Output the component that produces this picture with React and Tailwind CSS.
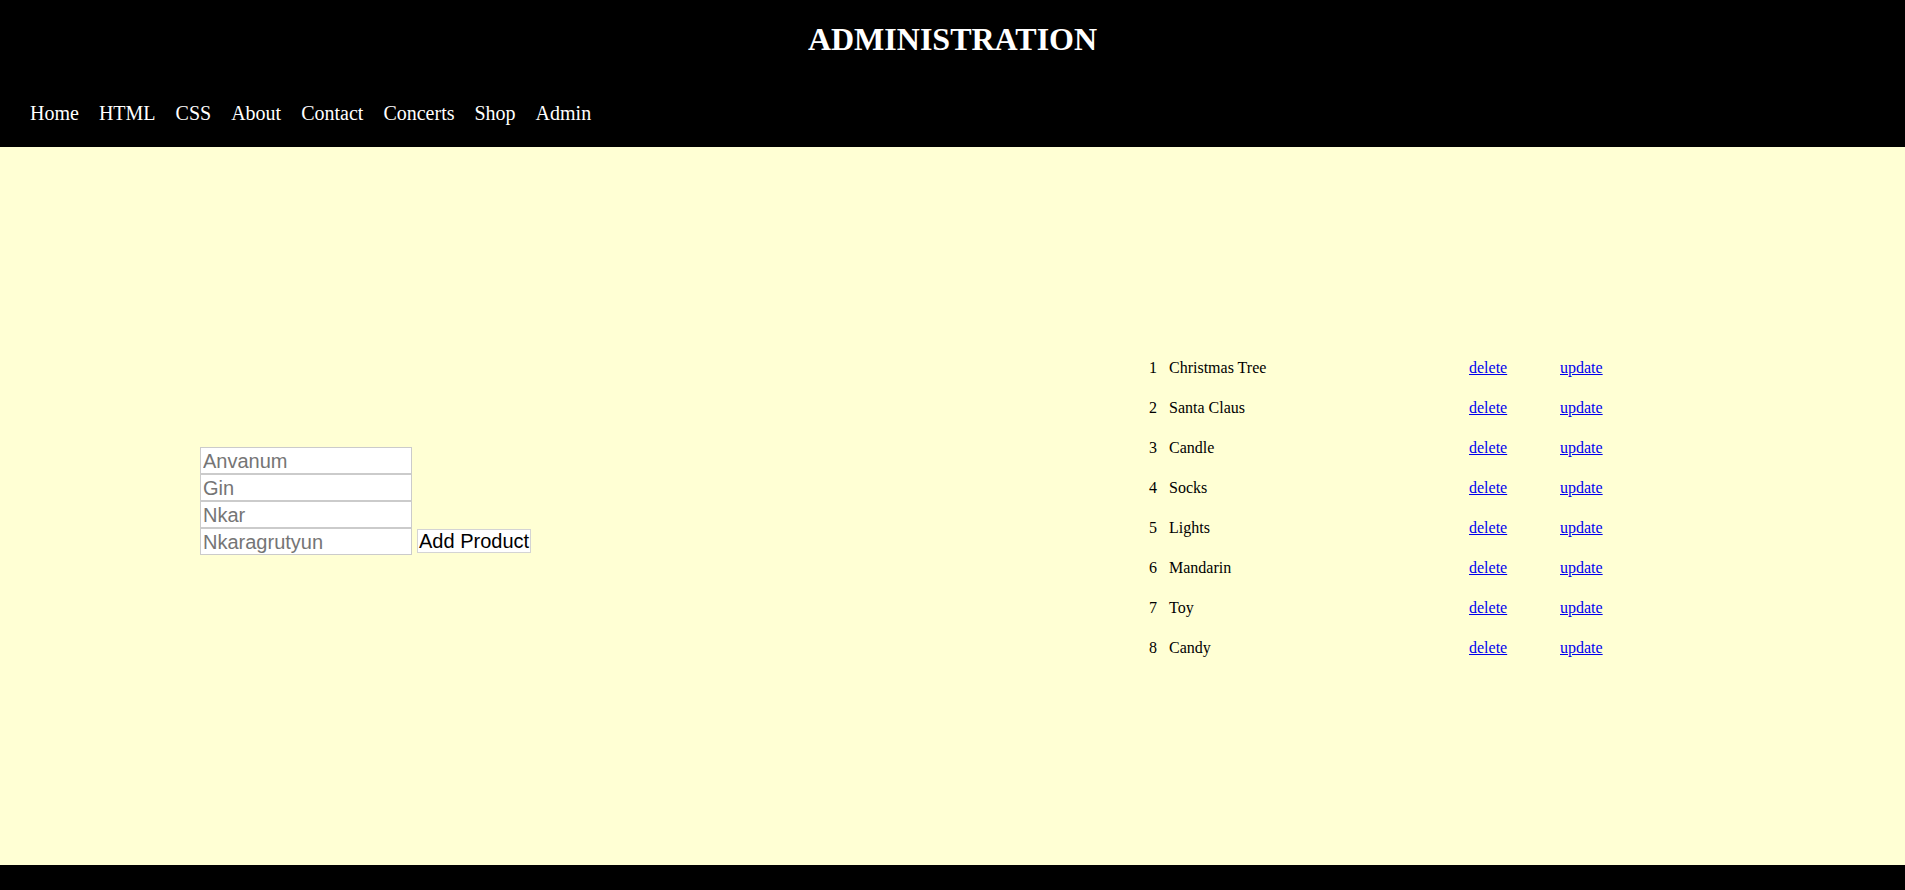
const navItems = ['Home', 'HTML', 'CSS', 'About', 'Contact', 'Concerts', 'Shop', 'Admin']

const products = [
  { id: 1, name: 'Christmas Tree' },
  { id: 2, name: 'Santa Claus' },
  { id: 3, name: 'Candle' },
  { id: 4, name: 'Socks' },
  { id: 5, name: 'Lights' },
  { id: 6, name: 'Mandarin' },
  { id: 7, name: 'Toy' },
  { id: 8, name: 'Candy' },
]

const inputCls =
  'block w-[212px] h-[27px] px-[2px] py-[1px] bg-white border border-[#cbcbcb] text-[20px] text-black placeholder:text-[#757575] outline-none'

export default function App() {
  return (
    <div className="min-h-screen flex flex-col bg-[#ffffd4] font-['Liberation_Serif',serif]">
      <header className="bg-black text-white h-[147px]">
        <h1 className="pt-[21px] text-center text-[32px] font-bold leading-[37px]">ADMINISTRATION</h1>
        <nav className="mt-[44px]">
          <ul className="flex gap-[20px] pl-[30px] text-[20px] leading-[23px]">
            {navItems.map((item) => (
              <li key={item}>
                <a href="#" className="text-white">{item}</a>
              </li>
            ))}
          </ul>
        </nav>
      </header>

      <main className="h-[718px] flex items-start">
        <div className="w-[1149px] shrink-0 pl-[200px] pt-[300px]">
          <form className="font-['Liberation_Sans',Arial,sans-serif]">
            <input className={inputCls} placeholder="Anvanum" />
            <input className={inputCls} placeholder="Gin" />
            <input className={inputCls} placeholder="Nkar" />
            <div className="flex items-end">
              <input className={inputCls} placeholder="Nkaragrutyun" />
              <button
                type="button"
                className="ml-[5px] mb-[2px] h-[24px] px-[1px] bg-white border border-[#d4d4d4] text-[20px] leading-[22px] text-black"
              >
                Add Product
              </button>
            </div>
          </form>
        </div>

        <div className="mt-[201px] text-[16px] leading-[18px] text-black">
          {products.map((p) => (
            <div key={p.id} className="grid grid-cols-[20px_300px_91px_auto] items-center h-[40px]">
              <span>{p.id}</span>
              <span>{p.name}</span>
              <a href="#" className="text-[#0000ee] underline">delete</a>
              <a href="#" className="text-[#0000ee] underline">update</a>
            </div>
          ))}
        </div>
      </main>

      <footer className="bg-black h-[25px]" />
    </div>
  )
}
